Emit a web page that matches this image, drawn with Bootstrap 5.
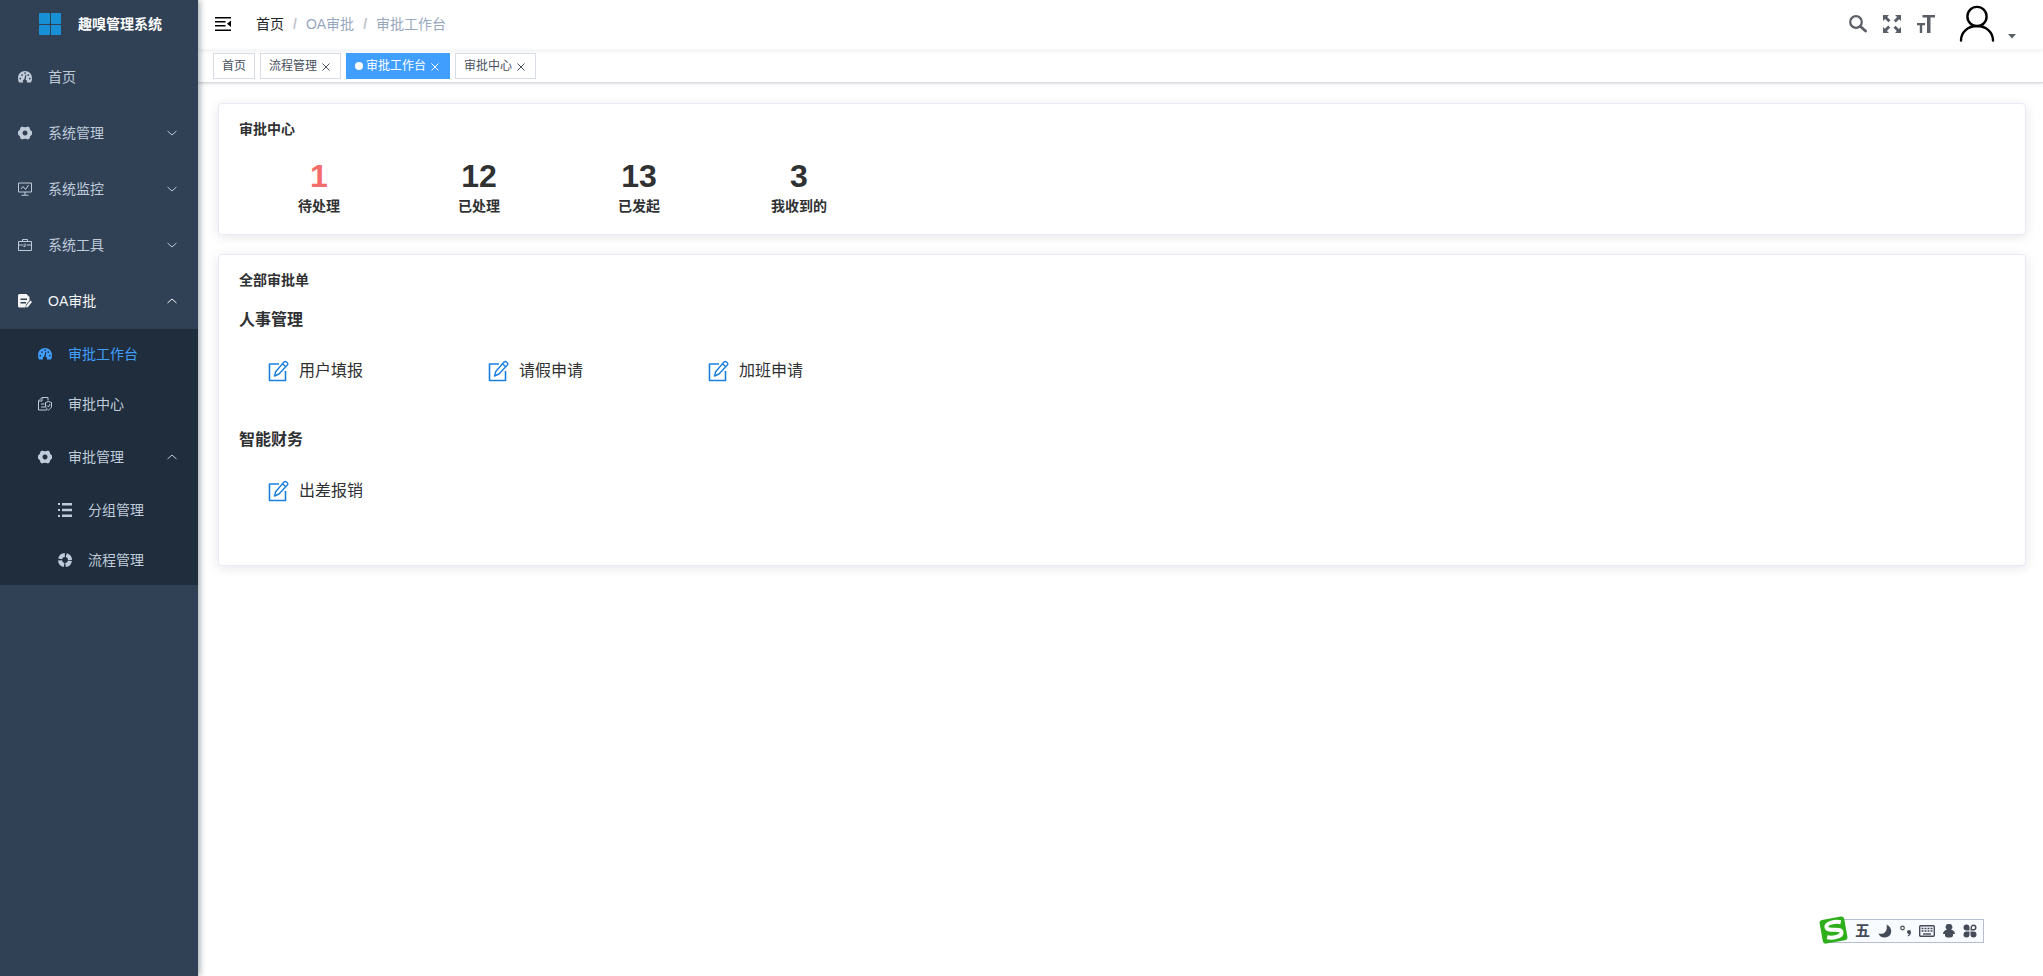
<!DOCTYPE html>
<html lang="zh-CN">
<head>
<meta charset="utf-8">
<meta name="viewport" content="width=device-width, initial-scale=1">
<title>审批工作台</title>
<link href="https://cdn.jsdelivr.net/npm/bootstrap@5.3.0/dist/css/bootstrap.min.css" rel="stylesheet">
<style>
body{font-family:"Liberation Sans","Noto Sans CJK SC",sans-serif;font-size:14px;line-height:20px;color:#303133}
a{color:inherit;text-decoration:none}
svg{display:block;flex:none}
.side{width:198px;flex:none;background:#304156;box-shadow:2px 0 6px rgba(0,21,41,.35);z-index:2}
.brand{height:49px;padding:0 0 2px 38px;gap:16px;color:#fff;font-weight:700}
.menu a{height:56px;display:flex;align-items:center;gap:16px;padding:0 20px 0 18px;color:#bfcbd9}
.menu .leaf{height:50px}
.menu .open{color:#f4f4f5}
.menu .now{color:#409eff}
.menu .lv2{padding-left:38px}
.menu .lv3{padding-left:58px}
.menu .arrow{margin-left:auto}
.sub{background:#1f2d3d}
.topbar{height:50px;padding:0 24px 2px 17px;box-shadow:0 1px 4px rgba(0,21,41,.08)}
.crumbs{--bs-breadcrumb-divider-color:#c0c4cc;--bs-breadcrumb-item-padding-x:9px;--bs-breadcrumb-item-active-color:#97a8be;margin:0 0 0 25px;color:#97a8be}
.crumbs .breadcrumb-item+.breadcrumb-item::before{font-weight:700}
.tool{border:0;background:none;padding:0;color:#5a5e66}
.caret{margin-left:10px}
.tags{height:33px;padding:3px 15px 0;gap:5px;border-bottom:1px solid #d8dce5;box-shadow:0 1px 3px rgba(0,0,0,.12),0 0 3px rgba(0,0,0,.04)}
.tag{height:26px;padding:0 8px;border:1px solid #d8dce5;font-size:12px;color:#495060;display:flex;align-items:center;background:#fff}
.tag.now{background:#409eff;border-color:#409eff;color:#fff}
.tag .dot{width:8px;height:8px;border-radius:50%;background:#fff;margin-right:3px}
.tag button{border:0;background:none;color:inherit;padding:2px 2px 0 5px}
.board{padding:20px 17px 20px 20px;gap:19px}
.panel{border:1px solid #e6ebf5;border-radius:4px;box-shadow:0 2px 12px rgba(0,0,0,.1);padding:15px 20px}
.panel h2{font-size:14px;line-height:20px;font-weight:700;margin:0}
.panel h3{font-size:16px;line-height:20px;font-weight:700;margin:0;padding-top:20px}
.panel .form-row + h3{padding-top:48px}
.panel.forms{padding-bottom:63px}
.stats{padding:17px 0 3px}
.stat{width:160px;text-align:center;font-weight:700}
.stat b{display:block;font-size:32px;line-height:40px}
.stat b.todo{color:#f56c6c}
.form-link{width:220px;padding-left:29px;gap:10px;display:flex;align-items:center;font-size:16px;line-height:20px}
.form-row{margin-top:30px}
.ime{position:fixed;right:59px;bottom:33px;width:157px;height:24px;padding:0 6px 0 27px;border:1px solid #b5bdcf;background:#f8fbff;color:#454b59}
.ime button{border:0;background:none;padding:0;color:inherit;display:block}
.ime-logo{position:absolute;left:-9px;top:-5px}
.ime .ime-word{font-size:15px;line-height:20px;font-weight:700}
</style>
</head>
<body class="bg-white">
<svg width="0" height="0" class="position-absolute" aria-hidden="true">
<symbol id="gauge" viewBox="0 0 28 28"><path fill="currentColor" fill-rule="evenodd" d="M14 2C6 2 0 8 0 16.500c0 3 .7 6 2 8.500h8.600a4 4 0 0 1 1.800-6L15 9.500l1.800.5-1.600 9.300a4 4 0 0 1 2.200 5.700H26c1.300-2.500 2-5.500 2-8.500C28 8 22 2 14 2zM4.500 15.500a1.600 1.600 0 1 0 .1 0zM8 8.500a1.600 1.600 0 1 0 .1 0zM14 4.500a1.500 1.500 0 1 0 .1 0zM20.500 8.500a1.600 1.600 0 1 0 .1 0zM23.500 15.500a1.600 1.600 0 1 0 .1 0z"/></symbol>
<symbol id="gear" viewBox="0 0 28 28"><path fill="currentColor" fill-rule="evenodd" d="M8 1q2 1.500 6 1.500T20 1l3 2q.3 5 5 8v6q-4.700 3-5 8l-3 2q-2-1.500-6-1.500T8 27l-3-2q-.3-5-5-8v-6q4.700-3 5-8zM14 9a5 5 0 1 0 .1 0z"/></symbol>
<symbol id="monitor" viewBox="0 0 28 28"><path fill="none" stroke="currentColor" stroke-width="2" d="M1 2h26v18H1zM14 20v6M7 26.500h14M6 14l4-5 5 6 6-9"/></symbol>
<symbol id="case" viewBox="0 0 28 28"><path fill="none" stroke="currentColor" stroke-width="2" d="M1 7h26v18H1zM9 7V3h10v4M1 14h10m6 0h10M14 11v6h-3"/></symbol>
<symbol id="form" viewBox="0 0 28 28"><path fill="currentColor" fill-rule="evenodd" d="M3 0h14l6 6v7l-7 8-1 6H3a3 3 0 0 1-3-3V3a3 3 0 0 1 3-3zM5 9v3h13V9zm0 7v3h11v-3z"/><path fill="currentColor" d="m25 13 3 3-8 10-4 1 1-5z"/></symbol>
<symbol id="check" viewBox="0 0 28 28"><path fill="none" stroke="currentColor" stroke-width="2" d="M20 7V1H8L1 8v18h17M8 1v7H1M6 14h7M6 20h8"/><path fill="none" stroke="currentColor" stroke-width="2" d="m21 9 6 2v7c0 4-3 6-6 8-3-2-6-4-6-8v-7zM18 17l3 3 3-6"/></symbol>
<symbol id="list" viewBox="0 0 28 28"><path fill="currentColor" d="M0 0h4v4H0zM8 0h20v5H8zM0 12h4v4H0zM8 11.500h20v5H8zM0 24h4v4H0zM8 23h20v5H8z"/></symbol>
<symbol id="ring" viewBox="0 0 28 28"><circle cx="14" cy="14" r="10" fill="none" stroke="currentColor" stroke-width="8" stroke-dasharray="12.700 3" stroke-dashoffset="-1.500"/></symbol>
<symbol id="down" viewBox="0 0 12 12"><path d="m1.500 4 4.500 4 4.500-4" fill="none" stroke="currentColor"/></symbol>
<symbol id="up" viewBox="0 0 12 12"><path d="m1.500 8 4.500-4 4.500 4" fill="none" stroke="currentColor"/></symbol>
<symbol id="cross" viewBox="0 0 8 8"><path d="m.5.5 7 7m0-7-7 7" fill="none" stroke="currentColor"/></symbol>
<symbol id="edit" viewBox="0 0 21 22"><g fill="none" stroke="#1b7fe0" stroke-linejoin="round"><path d="M11 4H1.500v16.500h16V11" stroke-width="1.600"/><path d="m6.500 16 1.300-4.500L16 2a1.700 1.700 0 0 1 2.400 0l.9.800a1.700 1.700 0 0 1 0 2.200L11 14zM14.500 3.800l3.200 2.900" stroke-width="1.400"/></g></symbol>
</svg>

<div class="d-flex min-vh-100">
<aside class="side">
  <a href="#" class="brand d-flex align-items-center">
    <svg width="24" height="24" viewBox="0 0 24 24" fill="#1890d5"><rect x="1" y="1" width="11" height="11" rx="1"/><rect x="13" y="1" width="10" height="11" rx="1"/><rect x="1" y="13" width="11" height="10" rx="1"/><rect x="13" y="13" width="10" height="10" rx="1"/></svg>
    <span>趣嗅管理系统</span>
  </a>
  <nav class="menu">
    <a href="#"><svg width="14" height="14"><use href="#gauge"/></svg>首页</a>
    <a href="#"><svg width="14" height="14"><use href="#gear"/></svg>系统管理<svg class="arrow" width="12" height="12"><use href="#down"/></svg></a>
    <a href="#"><svg width="14" height="14"><use href="#monitor"/></svg>系统监控<svg class="arrow" width="12" height="12"><use href="#down"/></svg></a>
    <a href="#"><svg width="14" height="14"><use href="#case"/></svg>系统工具<svg class="arrow" width="12" height="12"><use href="#down"/></svg></a>
    <a href="#" class="open"><svg width="14" height="14"><use href="#form"/></svg>OA审批<svg class="arrow" width="12" height="12"><use href="#up"/></svg></a>
    <div class="sub">
      <a href="#" class="leaf lv2 now"><svg width="14" height="14"><use href="#gauge"/></svg>审批工作台</a>
      <a href="#" class="leaf lv2"><svg width="14" height="14"><use href="#check"/></svg>审批中心</a>
      <a href="#" class="lv2"><svg width="14" height="14"><use href="#gear"/></svg>审批管理<svg class="arrow" width="12" height="12"><use href="#up"/></svg></a>
      <a href="#" class="leaf lv3"><svg width="14" height="14"><use href="#list"/></svg>分组管理</a>
      <a href="#" class="leaf lv3"><svg width="14" height="14"><use href="#ring"/></svg>流程管理</a>
    </div>
  </nav>
</aside>

<div class="flex-grow-1">
  <header class="topbar d-flex align-items-center">
    <button class="tool text-black" type="button" aria-label="收起菜单"><svg width="16" height="16" viewBox="0 0 16 16"><path fill="currentColor" d="M0 1h16v1.500H0zM0 5h10.500v1.500H0zM0 9h10.500v1.500H0zM0 13.500h16V15H0zM16 4.500v6.500l-4-3.200z"/></svg></button>
    <nav aria-label="breadcrumb">
      <ol class="breadcrumb crumbs">
        <li class="breadcrumb-item"><a href="#" class="text-dark">首页</a></li>
        <li class="breadcrumb-item">OA审批</li>
        <li class="breadcrumb-item active" aria-current="page">审批工作台</li>
      </ol>
    </nav>
    <div class="ms-auto d-flex align-items-center gap-3">
      <button class="tool" type="button" aria-label="搜索"><svg width="18" height="18" viewBox="0 0 18 18" fill="none" stroke="currentColor"><circle cx="7" cy="7" r="5.800" stroke-width="2.200"/><path d="m11.500 11.500 5 4.500" stroke-width="2.800" stroke-linecap="round"/></svg></button>
      <button class="tool" type="button" aria-label="全屏"><svg width="18" height="18" viewBox="0 0 18 18"><path id="corner" fill="currentColor" d="M0 0h6L4.200 1.900l3.300 3.300-2 2-3.400-3.300L0 6z"/><use href="#corner" transform="rotate(90 9 9)"/><use href="#corner" transform="rotate(180 9 9)"/><use href="#corner" transform="rotate(270 9 9)"/></svg></button>
      <button class="tool" type="button" aria-label="布局大小"><svg width="18" height="18" viewBox="0 0 18 18"><path fill="currentColor" d="M5.500 0H18v2.500h-4.500V18H10V2.500H5.500zM0 8h8v2.200H5.200V18H2.800v-7.800H0z"/></svg></button>
      <button class="tool d-flex align-items-end ms-2" type="button" aria-label="用户菜单">
        <svg width="36" height="38" viewBox="0 0 36 38" fill="none" stroke="#000" stroke-width="2.400" stroke-linecap="round"><circle cx="18" cy="11.500" r="9.600"/><path d="M2 35.500c0-8.500 7-14.500 16-14.500s16 6 16 14.500"/></svg>
        <svg class="caret" width="14" height="12" viewBox="0 0 14 12"><path fill="currentColor" d="M3 3h8L7 7.500z"/></svg>
      </button>
    </div>
  </header>
  <nav class="tags d-flex" aria-label="已打开页面">
    <div class="tag"><a href="#">首页</a></div>
    <div class="tag"><a href="#">流程管理</a><button type="button" aria-label="关闭"><svg width="8" height="8"><use href="#cross"/></svg></button></div>
    <div class="tag now"><span class="dot"></span><a href="#">审批工作台</a><button type="button" aria-label="关闭"><svg width="8" height="8"><use href="#cross"/></svg></button></div>
    <div class="tag"><a href="#">审批中心</a><button type="button" aria-label="关闭"><svg width="8" height="8"><use href="#cross"/></svg></button></div>
  </nav>

  <main class="board d-flex flex-column">
    <section class="panel bg-white">
      <h2>审批中心</h2>
      <div class="d-flex stats">
        <a href="#" class="stat"><b class="todo">1</b>待处理</a>
        <a href="#" class="stat"><b>12</b>已处理</a>
        <a href="#" class="stat"><b>13</b>已发起</a>
        <a href="#" class="stat"><b>3</b>我收到的</a>
      </div>
    </section>
    <section class="panel forms bg-white">
      <h2>全部审批单</h2>
      <h3>人事管理</h3>
      <div class="d-flex form-row">
        <a href="#" class="form-link"><svg width="21" height="22"><use href="#edit"/></svg>用户填报</a>
        <a href="#" class="form-link"><svg width="21" height="22"><use href="#edit"/></svg>请假申请</a>
        <a href="#" class="form-link"><svg width="21" height="22"><use href="#edit"/></svg>加班申请</a>
      </div>
      <h3>智能财务</h3>
      <div class="d-flex form-row">
        <a href="#" class="form-link"><svg width="21" height="22"><use href="#edit"/></svg>出差报销</a>
      </div>
    </section>
  </main>
</div>
</div>

<div class="ime d-flex align-items-center justify-content-between">
  <svg class="ime-logo" width="30" height="30" viewBox="0 0 30 30"><g transform="rotate(-10 15 15)"><rect x="2" y="3" width="25" height="24" rx="3" fill="#2fae1c"/><path d="M23 8.500C18 6.500 8 6.500 8 11c0 5 14 2.500 14 7.500 0 4.500-10 4.500-15 2.500" fill="none" stroke="#fff" stroke-width="4"/></g></svg>
  <button type="button" class="ime-word">五</button>
  <button type="button" aria-label="半角"><svg width="14" height="14" viewBox="0 0 14 14"><path fill="currentColor" d="M8.500.5C15 3 15 13 7 13.500 4 13.700 1 12 .5 9.500 6 11 10 7 8.500.5z"/></svg></button>
  <button type="button" aria-label="标点"><svg width="12" height="12" viewBox="0 0 12 12"><circle cx="2.500" cy="3" r="1.800" fill="none" stroke="currentColor" stroke-width="1.200"/><path fill="currentColor" d="M9 5a2 2 0 0 1 2 2c0 2-1 3.500-3 4.500l-.5-.8C8.500 10 9 9.500 9 9a2 2 0 0 1 0-4z"/></svg></button>
  <button type="button" aria-label="软键盘"><svg width="16" height="14" viewBox="0 0 16 14"><rect x=".7" y="1.700" width="14.600" height="10.600" rx="1" fill="none" stroke="currentColor" stroke-width="1.400"/><path d="M2.500 4.500h11M2.500 7h11" stroke="currentColor" stroke-width="1.500" stroke-dasharray="2 1"/><path d="M4 10h8" stroke="currentColor" stroke-width="1.400"/></svg></button>
  <button type="button" aria-label="账号"><svg width="12" height="14" viewBox="0 0 12 14"><path fill="currentColor" d="M6 0a3 3 0 0 1 2 5.500c2.500.5 4 2.500 4 4.500H10v2c-1 2-7 2-8 0v-2H0c0-2 1.500-4 4-4.500A3 3 0 0 1 6 0z"/></svg></button>
  <button type="button" aria-label="工具箱"><svg width="14" height="14" viewBox="0 0 14 14" fill="currentColor"><path d="M3.500.5a3 3 0 0 1 3 3v3h-3a3 3 0 0 1 0-6zM3.500 7.500h3v3a3 3 0 1 1-3-3zM7.500 7.500h3a3 3 0 1 1-3 3z"/><path d="M8.200 5.800V3.500a2.300 2.300 0 1 1 2.300 2.300z" fill="none" stroke="currentColor" stroke-width="1.400"/></svg></button>
</div>
<script src="https://cdn.jsdelivr.net/npm/bootstrap@5.3.0/dist/js/bootstrap.bundle.min.js"></script>
</body>
</html>
